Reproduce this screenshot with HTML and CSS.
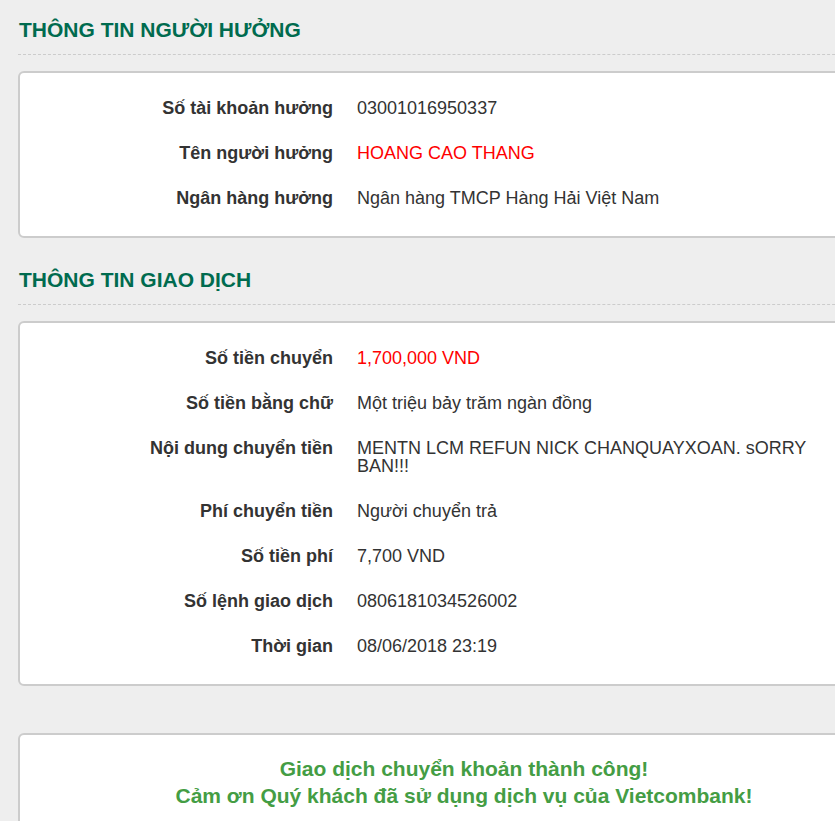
FILE: index.html
```html
<!DOCTYPE html>
<html lang="vi">
<head>
<meta charset="utf-8">
<title>Vietcombank</title>
<link rel="stylesheet" href="styles.css">
</head>
<body>
<div class="page">
  <h2 class="section-title">THÔNG TIN NGƯỜI HƯỞNG</h2>
  <div class="card">
    <div class="info-grid">
      <div class="label">Số tài khoản hưởng</div><div class="value">03001016950337</div>
      <div class="label">Tên người hưởng</div><div class="value red">HOANG CAO THANG</div>
      <div class="label">Ngân hàng hưởng</div><div class="value">Ngân hàng TMCP Hàng Hải Việt Nam</div>
    </div>
  </div>

  <h2 class="section-title second">THÔNG TIN GIAO DỊCH</h2>
  <div class="card">
    <div class="info-grid">
      <div class="label">Số tiền chuyển</div><div class="value red">1,700,000 VND</div>
      <div class="label">Số tiền bằng chữ</div><div class="value">Một triệu bảy trăm ngàn đồng</div>
      <div class="label">Nội dung chuyển tiền</div><div class="value">MENTN LCM REFUN NICK CHANQUAYXOAN. sORRY BAN!!!</div>
      <div class="label">Phí chuyển tiền</div><div class="value">Người chuyển trả</div>
      <div class="label">Số tiền phí</div><div class="value">7,700 VND</div>
      <div class="label">Số lệnh giao dịch</div><div class="value">0806181034526002</div>
      <div class="label">Thời gian</div><div class="value">08/06/2018 23:19</div>
    </div>
  </div>

  <div class="card success">
    <p class="success-text">Giao dịch chuyển khoản thành công!<br>Cảm ơn Quý khách đã sử dụng dịch vụ của Vietcombank!</p>
  </div>
</div>
</body>
</html>
```
FILE: styles.css
```css
html, body {
  margin: 0;
  padding: 0;
  overflow: hidden;
  background: #eeeeee;
}
body {
  font-family: "Liberation Sans", Arial, sans-serif;
  color: #333333;
}
.page {
  width: 892px;
  padding: 0 0 40px 18px;
}
.section-title {
  margin: 0;
  padding: 18px 0 12px 1px;
  font-size: 21px;
  line-height: 24px;
  font-weight: bold;
  color: #006b4f;
  border-bottom: 1px dashed #cccccc;
}
.section-title.second {
  margin-top: 12px;
}
.card {
  box-sizing: border-box;
  width: 892px;
  margin-top: 16px;
  background: #ffffff;
  border: 2px solid #cccccc;
  border-radius: 6px;
  padding: 12px 0 16px 0;
}
.info-grid {
  display: grid;
  grid-template-columns: 313px 470px;
  column-gap: 23px;
  font-size: 18px;
  line-height: 18px;
}
.label {
  text-align: right;
  font-weight: bold;
  padding: 14px 0 13px;
}
.value {
  padding: 14px 0 13px 1px;
}
.red {
  color: #ff0000;
}
.card.success {
  margin-top: 47px;
  padding: 20px 0 20px;
}
.success-text {
  margin: 0;
  text-align: center;
  font-size: 21px;
  line-height: 27px;
  font-weight: bold;
  color: #449d44;
}
```
